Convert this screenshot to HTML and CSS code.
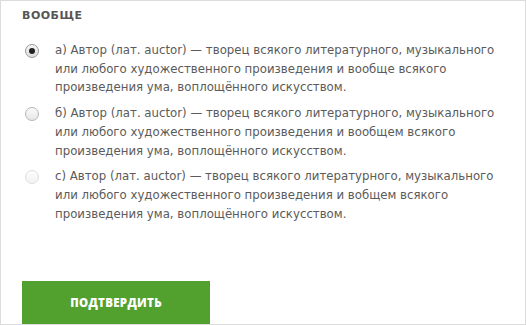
FILE: index.html
```html
<!DOCTYPE html>
<html lang="ru">
<head>
<meta charset="utf-8">
<link rel="stylesheet" href="styles.css">
</head>
<body>
<div class="panel">
  <h2 class="title">Вообще</h2>
  <ul class="options">
    <li class="option">
      <span class="radio checked"></span>
      <span class="label">а) Автор (лат. auctor) — творец всякого литературного, музыкального или любого художественного произведения и вообще всякого произведения ума, воплощённого искусством.</span>
    </li>
    <li class="option">
      <span class="radio"></span>
      <span class="label">б) Автор (лат. auctor) — творец всякого литературного, музыкального или любого художественного произведения и вообщем всякого произведения ума, воплощённого искусством.</span>
    </li>
    <li class="option">
      <span class="radio disabled"></span>
      <span class="label">с) Автор (лат. auctor) — творец всякого литературного, музыкального или любого художественного произведения и вобщем всякого произведения ума, воплощённого искусством.</span>
    </li>
  </ul>
  <button class="submit">Подтвердить</button>
</div>
</body>
</html>
```
FILE: styles.css
```css
html, body {
  margin: 0;
  padding: 0;
  background: #fff;
}
.panel {
  box-sizing: border-box;
  width: 526px;
  height: 325px;
  border: 1px solid #dcdcdc;
  overflow: hidden;
  padding: 9px 21px 0 21px;
  font-family: "DejaVu Sans", Verdana, sans-serif;
  color: #5b5b5b;
}
.title {
  margin: 0;
  font-size: 11px;
  font-weight: bold;
  text-transform: uppercase;
  letter-spacing: 0.5px;
  line-height: 12px;
  color: #555;
}
.options {
  list-style: none;
  margin: 19px 0 0 0;
  padding: 0;
}
.option {
  display: flex;
  gap: 16px;
  margin-bottom: 7px;
}
.radio {
  flex: none;
  box-sizing: border-box;
  width: 14px;
  height: 14px;
  margin: 3px 0 0 3px;
  border-radius: 50%;
  border: 1px solid #b5b5b5;
  background: linear-gradient(#fbfbfb, #e6e6e6);
  display: flex;
  align-items: center;
  justify-content: center;
}
.radio.checked {
  border-color: #9a9a9a;
  background: linear-gradient(#f6f6f6, #dedede);
}
.radio.checked::after {
  content: "";
  width: 6px;
  height: 6px;
  border-radius: 50%;
  background: #222;
}
.radio.disabled {
  border-color: #dedede;
  background: linear-gradient(#fdfdfd, #f3f3f3);
}
.label {
  font-size: 11.75px;
  line-height: 18.7px;
}
.submit {
  display: block;
  margin-top: 58px;
  width: 188px;
  height: 43px;
  border: 0;
  background: #52a12e;
  color: #fff;
  font-family: "Open Sans", sans-serif;
  font-weight: 800;
  font-size: 11.5px;
  text-transform: uppercase;
  letter-spacing: 0.3px;
  padding: 0;
}
```
